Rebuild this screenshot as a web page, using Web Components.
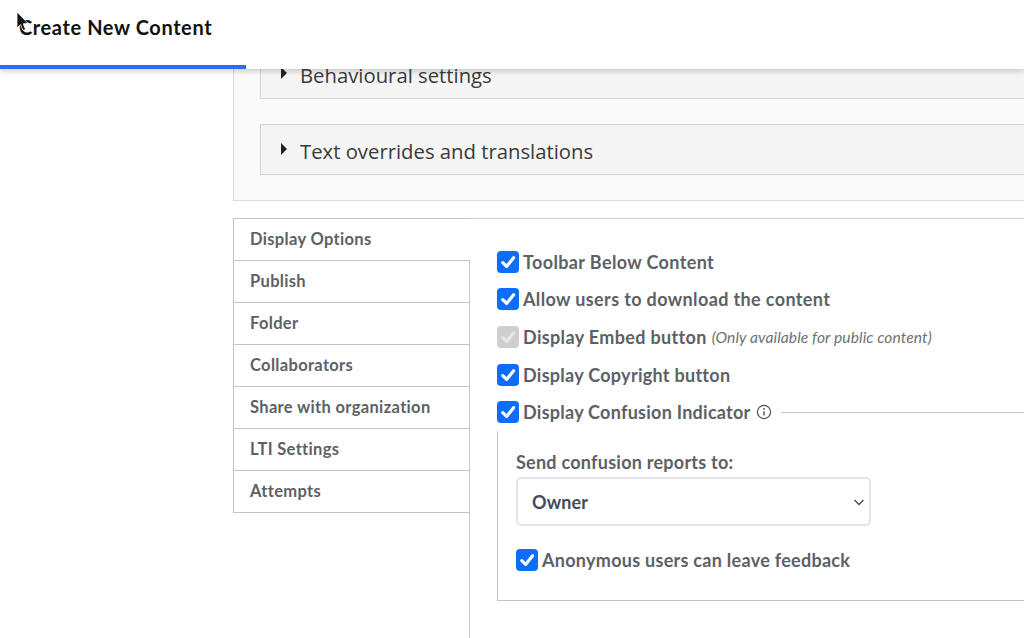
<!DOCTYPE html>
<html>
<head>
<meta charset="utf-8">
<title>Create New Content</title>
<style>
html, body {
	margin: 0;
	padding: 0;
	height: 638px;
	overflow: hidden;
	background: #fff;
	font-family: "Lato", "Liberation Sans", sans-serif;
}
</style>
</head>
<body>
<app-header>Create New Content</app-header>
<page-body>
	<options-panel>
		<collapse-row>Behavioural settings</collapse-row>
		<collapse-row>Text overrides and translations</collapse-row>
	</options-panel>
	<settings-tabs>
		<tab-item slot="tabs" active>Display Options</tab-item>
		<tab-item slot="tabs">Publish</tab-item>
		<tab-item slot="tabs">Folder</tab-item>
		<tab-item slot="tabs">Collaborators</tab-item>
		<tab-item slot="tabs">Share with organization</tab-item>
		<tab-item slot="tabs">LTI Settings</tab-item>
		<tab-item slot="tabs">Attempts</tab-item>
		<check-row>Toolbar Below Content</check-row>
		<check-row>Allow users to download the content</check-row>
		<check-row disabled note="(Only available for public content)" style="letter-spacing: 0.34px">Display Embed button</check-row>
		<check-row style="letter-spacing: 0.28px; height: 38px">Display Copyright button</check-row>
		<confusion-group></confusion-group>
	</settings-tabs>
</page-body>
<mouse-cursor></mouse-cursor>

<script>
(() => {

const define_element = (name, styles, markup) => {
	customElements.define(name, class extends HTMLElement {
		constructor() {
			super();
			this.attachShadow({ mode: 'open' });
			this.shadowRoot.innerHTML = `<style>${styles}</style>${markup(this)}`;
		}
	});
};

define_element('app-header', `
:host {
	position: absolute;
	top: 0;
	left: 0;
	right: 0;
	z-index: 5;
	display: block;
	height: 69px;
	background: #fff;
	box-shadow: 0 2px 6px rgba(0, 0, 0, 0.2);
}
.title {
	padding: 16px 0 0 19px;
	font-size: 20px;
	line-height: 22px;
	font-weight: 700;
	color: #111;
	letter-spacing: 0.6px;
}
.progress {
	position: absolute;
	left: 0;
	bottom: 0;
	width: 246px;
	height: 4px;
	background: #2a6fe8;
}
`, () => `<div class="title"><slot></slot></div><div class="progress"></div>`);

define_element('page-body', `
:host {
	display: block;
	padding-left: 233px;
	margin-top: -2px;
}
`, () => `<slot></slot>`);

define_element('options-panel', `
:host {
	display: flex;
	flex-direction: column;
	gap: 25px;
	box-sizing: border-box;
	height: 203px;
	padding: 50px 0 0 26px;
	margin-right: -40px;
	background: #fafafa;
	border: 1px solid #dcdcdc;
	border-top: 0;
}
`, () => `<slot></slot>`);

define_element('collapse-row', `
:host {
	display: flex;
	align-items: center;
	box-sizing: border-box;
	height: 51px;
	padding: 3px 0 0 20px;
	background: #f5f5f5;
	border: 1px solid #d3d3d3;
	font-family: "Open Sans", sans-serif;
	font-size: 20.3px;
	color: #3a3a3a;
}
.arrow {
	width: 0;
	height: 0;
	margin-right: 13px;
	border-left: 6px solid #222;
	border-top: 6px solid transparent;
	border-bottom: 6px solid transparent;
	transform: translateY(-2px);
}
`, () => `<span class="arrow"></span><slot></slot>`);

define_element('settings-tabs', `
:host {
	display: flex;
	margin-top: 17px;
	height: 420px;
}
.tabs {
	flex: 0 0 236px;
	display: flex;
	flex-direction: column;
	align-items: stretch;
}
.pane {
	flex: 1;
	min-width: 0;
	box-sizing: border-box;
	margin-right: -1px;
	padding: 24px 0 0 27px;
	border-left: 1px solid #c4c4c4;
	border-top: 1px solid #d0d0d0;
	display: flex;
	flex-direction: column;
}
`, () => `<div class="tabs"><slot name="tabs"></slot></div><div class="pane"><slot></slot></div>`);

define_element('tab-item', `
:host {
	display: block;
	box-sizing: border-box;
	height: 42px;
	padding-left: 16px;
	line-height: 41px;
	font-size: 16.5px;
	font-weight: 700;
	color: #5d6166;
	background: #fff;
	border: 1px solid #c4c4c4;
	border-top: 0;
	border-right: 0;
	letter-spacing: 0.33px;
}
:host(:first-child) {
	height: 43px;
	line-height: 40px;
	border-top: 1px solid #c4c4c4;
}
:host([active]) {
	margin-right: -1px;
	position: relative;
	z-index: 1;
}
`, () => `<slot></slot>`);

const tick_svg = `<svg viewBox="0 0 22 22" width="22" height="22"><path d="M5.8 11.6 L9.6 15.4 L16.6 6.8" fill="none" stroke="#fff" stroke-width="3.2" stroke-linecap="round" stroke-linejoin="round"/></svg>`;

define_element('check-row', `
:host {
	display: flex;
	align-items: center;
	height: 37.5px;
	gap: 4px;
	font-size: 18px;
	font-weight: 700;
	color: #5d6166;
	letter-spacing: 0.37px;
	white-space: nowrap;
}
.box {
	flex: 0 0 22px;
	height: 22px;
	border-radius: 4px;
	background: #0d6efd;
}
.box svg { display: block; }
:host([disabled]) .box { background: #cfcfcf; }
:host([disabled]) .box path { stroke: #e6e6e6; }
.note {
	margin-left: 1px;
	font-size: 15.6px;
	font-weight: 400;
	font-style: italic;
	letter-spacing: 0.1px;
	color: #6d7176;
}
`, host => {
	const note = host.getAttribute('note');
	return `<span class="box">${tick_svg}</span><span><slot></slot></span>${note ? `<span class="note">${note}</span>` : ''}<slot name="after"></slot>`;
});

define_element('confusion-group', `
:host {
	display: block;
	color: #5d6166;
	font-weight: 700;
}
.legend {
	display: flex;
	align-items: center;
}
.legend check-row {
	flex: none;
	letter-spacing: 0.26px;
}
.info {
	display: block;
	margin-left: 5px;
}
.rule {
	flex: 1;
	height: 1px;
	margin-left: 9px;
	background: #c4c4c4;
}
.box {
	box-sizing: border-box;
	height: 170px;
	padding: 21px 0 0 18px;
	border-left: 1px solid #c4c4c4;
	border-bottom: 1px solid #c4c4c4;
}
.box check-row {
	letter-spacing: 0.28px;
}
label {
	display: block;
	font-size: 18px;
	line-height: 20px;
	letter-spacing: 0.25px;
}
.select {
	display: flex;
	align-items: center;
	justify-content: space-between;
	box-sizing: border-box;
	width: 355px;
	height: 49px;
	margin: 5px 0 15px;
	padding: 0 4px 0 14px;
	background: #fff;
	border: 2px solid #e2e5ea;
	border-radius: 5px;
	font-size: 18px;
	color: #444b57;
	letter-spacing: 0.1px;
}
.select svg { display: block; }
`, () => `
<div class="legend">
	<check-row>Display Confusion Indicator</check-row>
	<svg class="info" viewBox="0 0 16 16" width="16" height="16"><circle cx="8" cy="8" r="6.6" fill="none" stroke="#4d5157" stroke-width="1.2"/><circle cx="8" cy="4.9" r="0.9" fill="#4d5157"/><path d="M8 7.2 V11.4" stroke="#4d5157" stroke-width="1.4"/></svg>
	<span class="rule"></span>
</div>
<div class="box">
	<label>Send confusion reports to:</label>
	<div class="select">
		<span>Owner</span>
		<svg viewBox="0 0 12 12" width="12" height="12"><path d="M1.5 4 L6 8.5 L10.5 4" fill="none" stroke="#444b57" stroke-width="1.3"/></svg>
	</div>
	<check-row>Anonymous users can leave feedback</check-row>
</div>`);

define_element('mouse-cursor', `
:host {
	position: absolute;
	top: 11px;
	left: 16px;
	z-index: 9;
	display: block;
	width: 14px;
	height: 22px;
}
svg { display: block; }
`, () => `<svg viewBox="0 0 14 22" width="14" height="22"><path d="M1 1 L1 17 L4.6 13.6 L7 19.5 L9.6 18.4 L7.2 12.8 L12 12.4 Z" fill="#111" stroke="#fff" stroke-width="0.8"/></svg>`);

})();
</script>
</body>
</html>
